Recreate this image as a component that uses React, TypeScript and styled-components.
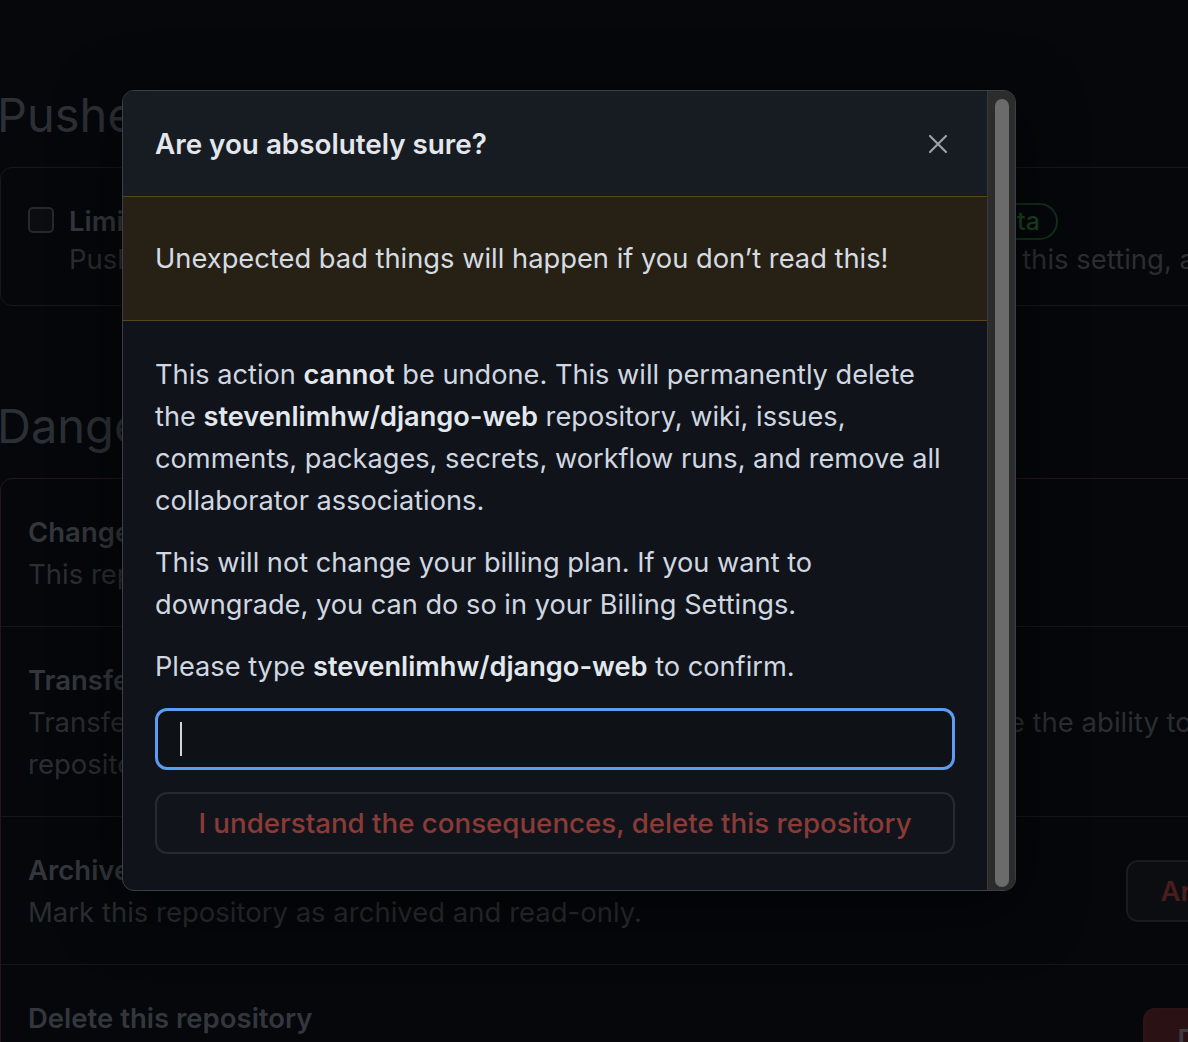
import React from 'react';
import styled, { createGlobalStyle } from 'styled-components';

const GlobalStyle = createGlobalStyle`
  html, body {
    margin: 0;
    padding: 0;
    background: #05070a;
    overflow: hidden;
  }
  body {
    font-family: Inter, "Noto Sans", "Liberation Sans", sans-serif;
  }
`;

const App: React.FC = () => {
  return (
    <Screen>
      <GlobalStyle />
      <Settings>
        <SectionHeading>Pushes</SectionHeading>
        <Box>
          <CheckRow>
            <Checkbox />
            <div>
              <RowTitle $tight>
                Limit how many branches and tags can be updated in a single push
                <BetaLabel>Beta</BetaLabel>
              </RowTitle>
              <RowText $tight>
                Pushes will be rejected if they attempt to update more. Learn more about this setting, and send us your feedback.
              </RowText>
            </div>
          </CheckRow>
        </Box>

        <SectionHeading $top={84}>Danger Zone</SectionHeading>
        <Box $danger>
          <DangerRow>
            <div>
              <RowTitle>Change repository visibility</RowTitle>
              <RowText>This repository is currently public.</RowText>
            </div>
            <GhostButton>Change visibility</GhostButton>
          </DangerRow>
          <DangerRow>
            <div>
              <RowTitle>Transfer ownership</RowTitle>
              <RowText $wrap>
                Transfer this repository to another user or to an organization where you have the ability to create repositories.
              </RowText>
            </div>
            <GhostButton>Transfer</GhostButton>
          </DangerRow>
          <DangerRow>
            <div>
              <RowTitle>Archive this repository</RowTitle>
              <RowText>Mark this repository as archived and read-only.</RowText>
            </div>
            <GhostButton>Archive this repository</GhostButton>
          </DangerRow>
          <DangerRow>
            <div>
              <RowTitle>Delete this repository</RowTitle>
              <RowText>Once you delete a repository, there is no going back. Please be certain.</RowText>
            </div>
            <GhostButton $filled>Delete this repository</GhostButton>
          </DangerRow>
        </Box>
      </Settings>

      <Dialog>
        <DialogMain>
          <DialogHeader>
            <DialogTitle>Are you absolutely sure?</DialogTitle>
            <CloseButton aria-label="Close">
              <svg width="20" height="20" viewBox="0 0 20 20" fill="none">
                <path d="M2 2L18 18M18 2L2 18" stroke="#9aa1aa" strokeWidth="2.2" strokeLinecap="round" />
              </svg>
            </CloseButton>
          </DialogHeader>
          <Flash>Unexpected bad things will happen if you don’t read this!</Flash>
          <DialogBody>
            <Para>
              This action <strong>cannot</strong> be undone. This will permanently delete the{' '}
              <strong>stevenlimhw/django-web</strong> repository, wiki, issues, comments, packages, secrets, workflow runs, and remove all collaborator associations.
            </Para>
            <Para>
              This will not change your billing plan. If you want to downgrade, you can do so in your Billing Settings.
            </Para>
            <Para>
              Please type <strong>stevenlimhw/django-web</strong> to confirm.
            </Para>
            <ConfirmInput>
              <Caret />
            </ConfirmInput>
            <DeleteButton disabled>I understand the consequences, delete this repository</DeleteButton>
          </DialogBody>
        </DialogMain>
        <ScrollTrack>
          <ScrollThumb />
        </ScrollTrack>
      </Dialog>
    </Screen>
  );
};

export default App;

// Background page (dimmed behind the dialog)
const Screen = styled.div`
  position: relative;
  width: 1188px;
  height: 1042px;
  overflow: hidden;
  background: #05070a;
`;

const Settings = styled.div`
  width: 1529px;
  padding-top: 79px;
  font-size: 27.5px;
  color: #2a2e34;
`;

const SectionHeading = styled.h2<{ $top?: number }>`
  margin: ${({ $top }) => $top || 0}px 0 16px -3px;
  font-size: 47px;
  font-weight: 400;
  line-height: 72px;
  color: #2c3036;
`;

const Box = styled.div<{ $danger?: boolean }>`
  border: 1px solid ${({ $danger }) => ($danger ? '#2a1318' : '#15181d')};
  border-radius: 12px;
`;

const CheckRow = styled.div`
  display: flex;
  gap: 15px;
  padding: 34px 27px 27px;
`;

const Checkbox = styled.span`
  flex-shrink: 0;
  width: 22px;
  height: 22px;
  margin-top: 5px;
  border: 2px solid #25292f;
  border-radius: 5px;
  background: #0b0d11;
`;

const RowTitle = styled.div<{ $tight?: boolean }>`
  display: flex;
  align-items: center;
  gap: 12px;
  font-size: 27.5px;
  font-weight: 600;
  line-height: ${({ $tight }) => ($tight ? 38 : 42)}px;
  color: #33373d;
  white-space: nowrap;
`;

const BetaLabel = styled.span`
  display: inline-flex;
  align-items: center;
  height: 37px;
  box-sizing: border-box;
  padding: 0 16px;
  border: 2px solid #123018;
  border-radius: 20px;
  font-size: 25px;
  font-weight: 500;
  color: #1b4424;
`;

const RowText = styled.div<{ $wrap?: boolean; $tight?: boolean }>`
  font-size: 27.5px;
  line-height: ${({ $tight }) => ($tight ? 38 : 42)}px;
  color: #2a2e33;
  max-width: ${({ $wrap }) => ($wrap ? '1270px' : 'none')};
  white-space: ${({ $wrap }) => ($wrap ? 'normal' : 'nowrap')};
`;

const DangerRow = styled.div`
  display: flex;
  align-items: center;
  justify-content: space-between;
  gap: 16px;
  padding: 32px 32px 31px 27px;
  & + & {
    border-top: 1px solid #14171c;
  }
`;

const GhostButton = styled.button<{ $filled?: boolean }>`
  flex-shrink: 0;
  height: 62px;
  padding: 0 32px;
  border: 2px solid ${({ $filled }) => ($filled ? '#2c1416' : '#181b20')};
  border-radius: 12px;
  background: ${({ $filled }) => ($filled ? '#2a1113' : '#0b0d11')};
  font-family: Inter, "Liberation Sans", sans-serif;
  font-size: 27.5px;
  font-weight: 600;
  color: ${({ $filled }) => ($filled ? '#3a3d42' : '#4a1d1c')};
`;

// Dialog
const Dialog = styled.div`
  position: absolute;
  left: 122px;
  top: 90px;
  width: 894px;
  height: 801px;
  box-sizing: border-box;
  display: flex;
  border: 1px solid #3b4048;
  border-radius: 12px;
  overflow: hidden;
  background: #10141a;
  box-shadow: 0 16px 64px rgba(0, 0, 0, 0.6);
`;

const DialogMain = styled.div`
  flex: 1;
  display: flex;
  flex-direction: column;
  border-bottom-right-radius: 12px;
  overflow: hidden;
`;

const DialogHeader = styled.div`
  display: flex;
  align-items: center;
  justify-content: space-between;
  height: 105px;
  padding: 0 39px 0 32px;
  background: #171b22;
`;

const DialogTitle = styled.h1`
  margin: 0;
  font-size: 27.8px;
  font-weight: 600;
  color: #e3e7ec;
`;

const CloseButton = styled.button`
  display: flex;
  padding: 0;
  border: none;
  background: none;
`;

const Flash = styled.div`
  display: flex;
  align-items: center;
  height: 123px;
  padding: 0 32px;
  border-top: 1px solid #5a461d;
  border-bottom: 1px solid #5a461d;
  background: #272115;
  font-size: 27.3px;
  color: #d6dbe2;
`;

const DialogBody = styled.div`
  flex: 1;
  display: flex;
  flex-direction: column;
  padding: 33px 32px 34px;
  font-size: 27.2px;
  line-height: 42px;
  color: #d1d7e0;

  strong {
    font-weight: 600;
    color: #e3e8ee;
  }
`;

const Para = styled.p`
  margin: 0 0 20px;
`;

const ConfirmInput = styled.div`
  display: flex;
  align-items: center;
  height: 62px;
  padding-left: 22px;
  box-sizing: border-box;
  border: 3px solid #5c9cf2;
  border-radius: 12px;
  background: #0e1116;
`;

const Caret = styled.span`
  width: 2px;
  height: 34px;
  background: #cfd5dd;
`;

const DeleteButton = styled.button`
  height: 62px;
  margin-top: 22px;
  border: 2px solid #262b32;
  border-radius: 12px;
  background: #11151b;
  font-family: Inter, "Liberation Sans", sans-serif;
  font-size: 27.7px;
  font-weight: 500;
  color: #8b3b37;
`;

const ScrollTrack = styled.div`
  display: flex;
  width: 28px;
  padding: 8px 6px 3px 7px;
  box-sizing: border-box;
  background: #2c2c2c;
  border-left: 1px solid #393939;
`;

const ScrollThumb = styled.div`
  flex: 1;
  border-radius: 8px;
  background: #6b6b6b;
`;
